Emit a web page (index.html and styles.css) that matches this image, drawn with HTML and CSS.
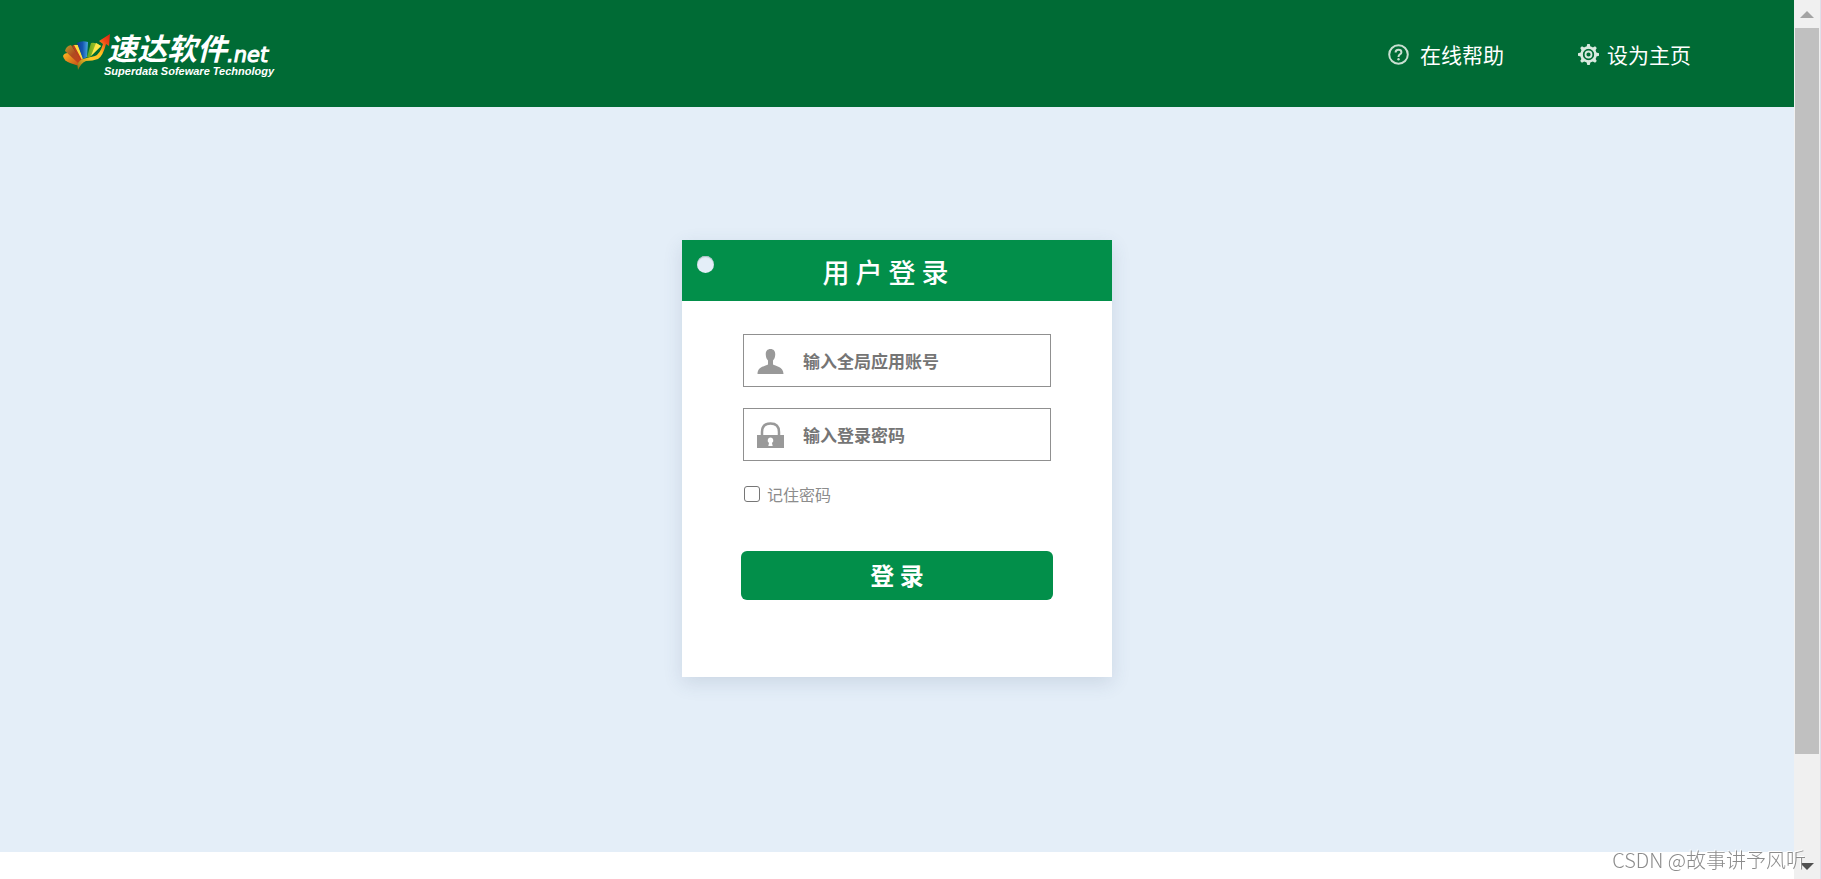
FILE: index.html
```html
<!DOCTYPE html>
<html lang="zh-CN">
<head>
<meta charset="utf-8">
<title>用户登录</title>
<link rel="stylesheet" href="styles.css">
</head>
<body>
<div class="page">
  <header class="topbar">
    <div class="logo">
      <svg class="logo-mark" viewBox="0 0 48 38" aria-hidden="true">
        <defs>
          <linearGradient id="fanRed" x1="0" y1="0" x2="1" y2="1"><stop offset="0" stop-color="#b9a028"/><stop offset=".5" stop-color="#b04a20"/><stop offset="1" stop-color="#c8401c"/></linearGradient>
          <linearGradient id="fanOrange" x1="0" y1="0" x2="1" y2="1"><stop offset="0" stop-color="#ffb820"/><stop offset="1" stop-color="#c04a18"/></linearGradient>
          <linearGradient id="fanBlue" x1="0" y1="0" x2="1" y2="0"><stop offset="0" stop-color="#0c3c90"/><stop offset=".5" stop-color="#1556b0"/><stop offset="1" stop-color="#4aa8e0"/></linearGradient>
          <linearGradient id="fanGreen" x1="0" y1="0" x2="1" y2="0"><stop offset="0" stop-color="#58a020"/><stop offset="1" stop-color="#d0d828"/></linearGradient>
          <linearGradient id="arrow" x1="0" y1="1" x2="1" y2="0"><stop offset="0" stop-color="#8a6a18"/><stop offset=".35" stop-color="#ffc828"/><stop offset=".6" stop-color="#ffc020"/><stop offset=".82" stop-color="#f04818"/><stop offset="1" stop-color="#e02010"/></linearGradient>
        </defs>
        <path fill="url(#fanOrange)" d="M1 23Q2 20 6 20L18 29L17 33L8 30Q2 28 1 23Z"/>
        <path fill="url(#fanRed)" d="M3 18Q4 13 9 12L20 28L16 30Z"/>
        <path fill="#c03c1c" d="M10 13Q12 11 16 12L21 27L19 28Z"/>
        <path fill="#ffdc40" d="M12 12L16 12L21 25L20 27Z"/>
        <path fill="url(#fanBlue)" d="M15 10Q20 7 26 9L25 24L21 26Z"/>
        <path fill="url(#fanGreen)" d="M29 10Q34 9 39 13L28 24L25 24Z"/>
        <path fill="#ffe84a" d="M34 10L39 13L29 23Z"/>
        <path fill="url(#arrow)" d="M16 37Q14 28 21 26Q24 25 33 23Q38 21 41 11L37 8L48 1L47 13L44 11Q41 23 36 26Q31 28 24 28Q19 30 16 37Z"/>
      </svg>
      <div class="logo-text">
        <div class="logo-name"><span class="logo-cn">速达软件</span><span class="logo-net">.net</span></div>
        <div class="logo-sub">Superdata Sofeware Technology</div>
      </div>
    </div>
    <nav class="links">
      <a class="link link-help" href="#">
        <svg class="link-icon" viewBox="0 0 21 21" aria-hidden="true"><g fill="none" stroke="#c8dfd1" stroke-width="2"><circle cx="10.500" cy="10.500" r="9.300"/><path d="M7.600 8.500Q7.600 5.800 10.500 5.800Q13.400 5.800 13.400 8.200Q13.400 9.600 11.900 10.400Q10.500 11.200 10.500 13"/></g><circle cx="10.500" cy="15.300" r="1.200" fill="#c8dfd1"/></svg>
        <span>在线帮助</span>
      </a>
      <a class="link link-home" href="#">
        <svg class="link-icon" viewBox="0 0 21 21" aria-hidden="true"><g fill="#d9e9df"><path id="tooth" d="M8 4.500L9.300 0H11.700L13 4.500ZM8 16.500L9.300 21H11.700L13 16.500Z"/><use href="#tooth" transform="rotate(45 10.500 10.500)"/><use href="#tooth" transform="rotate(90 10.500 10.500)"/><use href="#tooth" transform="rotate(135 10.500 10.500)"/></g><g fill="none" stroke="#d9e9df"><circle cx="10.500" cy="10.500" r="7" stroke-width="2.600"/><circle cx="10.500" cy="10.500" r="3" stroke-width="1.800"/></g></svg>
        <span>设为主页</span>
      </a>
    </nav>
  </header>
  <main class="stage">
    <form class="card">
      <div class="card-head"><span class="hole"></span><h1 class="card-title">用 户 登 录</h1></div>
      <div class="card-body">
        <div class="field">
          <svg class="field-icon" viewBox="0 0 27 27" aria-hidden="true"><path fill="#999" d="M13.500 1C17 1 18.500 3.600 18.200 7C18 9.800 17 11.500 16 12.500V16.500C18 18 26.500 18.500 26.500 26H.5C.5 18.500 9 18 11 16.500V12.500C10 11.500 9 9.800 8.800 7C8.500 3.600 10 1 13.500 1Z"/></svg>
          <input class="field-input" type="text" aria-label="账号" placeholder="输入全局应用账号">
        </div>
        <div class="field">
          <svg class="field-icon" viewBox="0 0 27 27" aria-hidden="true"><path fill="none" stroke="#999" stroke-width="2.500" d="M5 14V10C5 4 8.500 1.500 13.500 1.500S22 4 22 10V14"/><path fill="#999" d="M0 13H27V26H0Z"/><path fill="#fff" d="M13.500 15.500a3 3 0 0 1 1.500 5.500L15.700 24H11.300L12 21a3 3 0 0 1 1.500-5.500Z"/></svg>
          <input class="field-input" type="password" aria-label="密码" placeholder="输入登录密码">
        </div>
        <label class="remember"><input class="remember-box" type="checkbox"><span>记住密码</span></label>
        <button class="submit" type="button">登 录</button>
      </div>
    </form>
  </main>
</div>
<div class="scrollbar" aria-hidden="true">
  <svg class="scroll-arrow" viewBox="0 0 14 7"><path fill="#a3a3a3" d="M0 7L7 0L14 7Z"/></svg>
  <div class="scroll-track"><div class="scroll-thumb"></div></div>
  <svg class="scroll-arrow" viewBox="0 0 14 7"><path fill="#505050" d="M0 0H14L7 7Z"/></svg>
</div>
<div class="watermark">CSDN @故事讲予风听</div>
</body>
</html>
```
FILE: styles.css
```css
* { box-sizing: border-box; }
body {
  margin: 0;
  height: 100vh;
  display: flex;
  overflow: hidden;
  background: #fff;
  font-family: "Noto Sans CJK SC", sans-serif;
}
.page {
  flex: 1;
  min-width: 0;
  display: flex;
  flex-direction: column;
  padding-bottom: 27px;
}
.topbar {
  height: 107px;
  flex: none;
  display: flex;
  justify-content: space-between;
  align-items: flex-start;
  padding: 0 103px 0 62px;
  background: #006b35;
  color: #fff;
}
.logo { display: flex; padding-top: 33px; }
.logo-mark { width: 48px; height: 38px; flex: none; }
.logo-text { margin-left: -6px; font-style: italic; font-weight: bold; white-space: nowrap; }
.logo-name { display: flex; align-items: flex-start; height: 32px; padding-left: 3px; }
.logo-cn { font-size: 30px; line-height: 28px; }
.logo-net {
  align-self: flex-end;
  font-family: "DejaVu Sans", sans-serif;
  font-size: 21px;
  font-weight: normal;
  line-height: 20px;
  -webkit-text-stroke: 1px #fff;
}
.logo-sub { font-family: "Liberation Sans", sans-serif; font-size: 11px; line-height: 12px; }
.links { display: flex; gap: 74px; padding-top: 39px; }
.link {
  display: flex;
  align-items: center;
  height: 30px;
  color: #fff;
  font-size: 21px;
  text-decoration: none;
}
.link-icon { width: 21px; height: 21px; }
.link-help { gap: 11px; }
.link-home { gap: 8px; }
.stage {
  flex: 1;
  display: flex;
  justify-content: center;
  align-items: flex-start;
  padding-top: 133px;
  background: #e4eef8;
}
.card {
  width: 430px;
  background: #fff;
  box-shadow: 0 6px 18px rgba(60, 80, 110, 0.14);
}
.card-head {
  height: 61px;
  display: flex;
  align-items: flex-start;
  padding: 16px 15px;
  background: #028f4a;
}
.hole {
  width: 17px;
  height: 17px;
  border-radius: 50%;
  background: #e4eef8;
  box-shadow: inset 0 1px 1px #a9bcc0;
}
.card-title {
  flex: 1;
  margin: 0;
  padding-right: 40px;
  text-align: center;
  color: #fff;
  font-size: 27px;
  line-height: 32px;
  font-weight: 500;
}
.card-body {
  display: flex;
  flex-direction: column;
  padding: 33px 59px 77px;
}
.field {
  display: flex;
  align-items: center;
  height: 53px;
  margin: 0 2px 21px;
  padding-left: 13px;
  border: 1px solid #909090;
}
.field-icon { width: 27px; height: 29px; padding-top: 2px; flex: none; }
.field-input {
  flex: 1;
  min-width: 0;
  height: 100%;
  margin-left: 19px;
  padding: 0;
  border: 0;
  outline: 0;
  background: transparent;
  color: #757575;
  font-size: 17px;
  font-weight: bold;
  font-family: inherit;
}
.field-input::placeholder { color: #757575; }
.remember {
  display: flex;
  align-items: center;
  align-self: flex-start;
  gap: 7px;
  height: 24px;
  margin-left: 3px;
  color: #8c8c8c;
  font-size: 16px;
}
.remember-box {
  appearance: none;
  width: 16px;
  height: 16px;
  margin: 0;
  border: 1px solid #767676;
  border-radius: 3px;
  background: #fff;
}
.remember-box:checked { background: #028f4a; }
.submit {
  height: 49px;
  margin-top: 45px;
  border: 0;
  border-radius: 6px;
  padding: 0 0 2px;
  background: #028f4a;
  color: #fff;
  font-size: 24px;
  font-weight: bold;
  font-family: inherit;
}
.scrollbar {
  width: 27px;
  flex: none;
  display: flex;
  flex-direction: column;
  align-items: center;
  padding: 11px 0 9px;
  background: #f0f0f0;
  border-right: 1px solid #dde0ea;
}
.scroll-arrow { width: 14px; height: 7px; flex: none; }
.scroll-track { flex: 1; width: 24px; margin: 10px 0; }
.scroll-thumb { height: 88%; background: #c0c0c0; }
.watermark {
  position: fixed;
  right: 15px;
  bottom: 5px;
  color: #8c8c8c;
  font-size: 20px;
  line-height: 28px;
  font-weight: 300;
  text-shadow: -1px -1px 0 #fff;
}
```
